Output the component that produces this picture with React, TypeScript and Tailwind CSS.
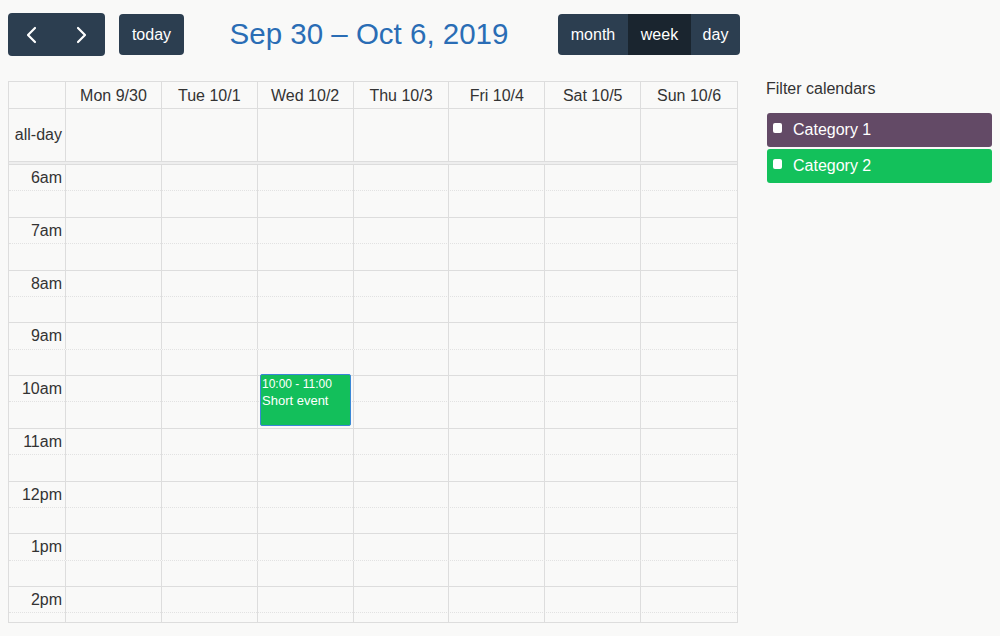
import React from "react";

const days = ["Mon 9/30", "Tue 10/1", "Wed 10/2", "Thu 10/3", "Fri 10/4", "Sat 10/5", "Sun 10/6"];
const hours = ["6am", "7am", "8am", "9am", "10am", "11am", "12pm", "1pm", "2pm"];

const cols = "grid grid-cols-[57px_repeat(7,minmax(0,1fr))]";

function Chevron({ dir }: { dir: "left" | "right" }) {
  return (
    <svg width="14" height="18" viewBox="0 0 14 18" fill="none">
      <path
        d={dir === "left" ? "M10 2 L3 9 L10 16" : "M4 2 L11 9 L4 16"}
        stroke="white"
        strokeWidth="2.2"
        strokeLinecap="round"
        strokeLinejoin="round"
      />
    </svg>
  );
}

function Toolbar() {
  return (
    <div className="flex items-center justify-between h-[43px]">
      <div className="flex items-center gap-[14px]">
        <div className="flex h-[43px] w-[97px] rounded bg-[#2c3e50] overflow-hidden">
          <button className="flex-1 flex items-center justify-center">
            <Chevron dir="left" />
          </button>
          <button className="flex-1 flex items-center justify-center">
            <Chevron dir="right" />
          </button>
        </div>
        <button className="h-[41px] w-[65px] rounded bg-[#2c3e50] text-white text-[16px]">today</button>
      </div>
      <h2 className="text-[29.5px] text-[#2a6db5] mr-[4px]">Sep 30 – Oct 6, 2019</h2>
      <div className="flex h-[41px] rounded overflow-hidden text-white text-[16px] -mr-px">
        <button className="w-[70px] bg-[#2c3e50]">month</button>
        <button className="w-[63px] bg-[#1a252f]">week</button>
        <button className="w-[49px] bg-[#2c3e50]">day</button>
      </div>
    </div>
  );
}

function SlotRow({ label, dotted }: { label?: string; dotted?: boolean }) {
  return (
    <div
      className={`${cols} h-[26.375px] border-t ${dotted ? "border-dotted border-[#e2e2e2]" : "border-[#ddd]"}`}
    >
      <div className="border-r border-[#ddd] text-right pr-[3px] leading-[26px]">{label}</div>
      {days.map((d, i) => (
        <div key={d} className={i < 6 ? "border-r border-[#ddd]" : ""} />
      ))}
    </div>
  );
}

function Calendar() {
  return (
    <div className="w-[730px] border border-[#ddd] text-[#333] text-[16px]">
      <div className={`${cols} h-[26px]`}>
        <div className="border-r border-[#ddd]" />
        {days.map((d, i) => (
          <div key={d} className={`flex items-center justify-center pt-[2px] ${i < 6 ? "border-r border-[#ddd]" : ""}`}>
            {d}
          </div>
        ))}
      </div>
      <div className={`${cols} h-[53px] border-t border-[#ddd]`}>
        <div className="border-r border-[#ddd] flex items-center justify-end pr-[3px]">all-day</div>
        {days.map((d, i) => (
          <div key={d} className={i < 6 ? "border-r border-[#ddd]" : ""} />
        ))}
      </div>
      <div className="h-[3px] bg-[#eee] border-t border-[#ddd]" />
      <div className="relative h-[458px] overflow-hidden">
        {hours.map((h) => (
          <div key={h}>
            <SlotRow label={h} />
            <SlotRow dotted />
          </div>
        ))}
        <SlotRow />
        <div className="absolute top-[210px] left-[251px] w-[91px] h-[52px] rounded-[2px] bg-[#13bf5b] border border-[#3a87d6] text-white px-[1px]">
          <div className="text-[12px] leading-[16px] mt-[1px]">10:00 - 11:00</div>
          <div className="text-[13px] leading-[18px]">Short event</div>
        </div>
      </div>
    </div>
  );
}

function Sidebar() {
  return (
    <div className="w-[225px]">
      <div className="text-[16px] text-[#333] mb-[12px] ml-[-1px]">Filter calendars</div>
      <div className="flex flex-col gap-[2px]">
        {[
          { name: "Category 1", bg: "bg-[#634a66]" },
          { name: "Category 2", bg: "bg-[#13c15b]" },
        ].map((c) => (
          <label key={c.name} className={`flex items-center h-[34px] rounded-[3px] ${c.bg} text-white text-[16px] pl-[6px]`}>
            <span className="w-[9px] h-[10px] rounded-[2px] bg-white mr-[11px] -mt-[4px]" />
            {c.name}
          </label>
        ))}
      </div>
    </div>
  );
}

export default function App() {
  return (
    <div
      className="min-h-[636px] w-[1000px] bg-[#f9f9f8] pl-[8px] pt-[13px]"
      style={{ fontFamily: '"Liberation Sans", Helvetica, Arial, sans-serif' }}
    >
      <div className="flex gap-[28px]">
        <div className="w-[731px]">
          <Toolbar />
          <div className="mt-[25px]">
            <Calendar />
          </div>
        </div>
        <div className="pt-[64px]">
          <Sidebar />
        </div>
      </div>
    </div>
  );
}
